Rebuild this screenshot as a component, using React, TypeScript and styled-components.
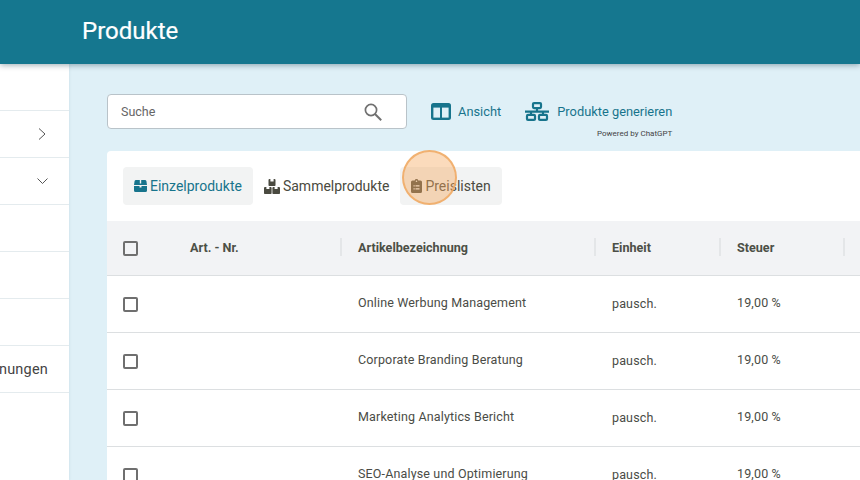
import React from "react";
import styled, { createGlobalStyle } from "styled-components";

const Global = createGlobalStyle`
  html, body { margin: 0; padding: 0; width: 860px; height: 480px; overflow: hidden; }
  body { font-family: Roboto, "Liberation Sans", sans-serif; background: #dff0f7; }
  * { box-sizing: border-box; }
`;

const Page = styled.div`
  position: relative;
  width: 860px;
  height: 480px;
  overflow: hidden;
  display: flex;
  flex-direction: column;
`;

const Header = styled.header`
  height: 64px;
  flex: none;
  background: #15778f;
  display: flex;
  align-items: center;
  padding-left: 82px;
  box-shadow: 0 1px 6px rgba(0, 40, 60, 0.4);
  position: relative;
  z-index: 2;
`;

const Title = styled.h1`
  margin: 0;
  color: #fff;
  font-size: 24px;
  font-weight: 400;
  -webkit-text-stroke: 0.2px #fff;
  position: relative;
  top: -1px;
`;

const Body = styled.div`
  flex: 1;
  display: flex;
  min-height: 0;
`;

const Sidebar = styled.nav`
  width: 69px;
  flex: none;
  background: #fff;
  overflow: hidden;
  padding-top: 46px;
  box-shadow: 1px 0 2px rgba(0, 60, 90, 0.06);
`;

const NavRow = styled.div`
  height: 47px;
  border-top: 1px solid #e4ebee;
  display: flex;
  align-items: center;
  justify-content: flex-end;
  padding-right: 21px;
  color: #444;
  font-size: 14.5px;
  white-space: nowrap;
  letter-spacing: 0.2px;
`;

const NavChevron = styled.svg<{ $wide?: boolean }>`
  width: ${(p) => (p.$wide ? 13 : 10)}px;
  height: 14px;
  margin-right: ${(p) => (p.$wide ? -1 : 0)}px;
  fill: none;
  stroke: #555;
  stroke-width: 1;
`;

const Main = styled.main`
  flex: 1;
  min-width: 0;
  padding: 30px 0 0 38px;
  overflow: hidden;
`;

const Toolbar = styled.div`
  display: flex;
  align-items: flex-start;
  height: 57px;
`;

const Search = styled.div`
  width: 300px;
  height: 35px;
  background: #fff;
  border: 1px solid #b9c3c9;
  border-radius: 4px;
  display: flex;
  align-items: center;
  justify-content: space-between;
  padding: 0 24px 0 13px;
  color: #666;
  font-size: 12.5px;
`;

const ToolAction = styled.div`
  display: flex;
  align-items: center;
  height: 35px;
  color: #17748c;
  font-size: 12.85px;
  white-space: nowrap;
`;

const AnsichtAction = styled(ToolAction)`
  margin-left: 24px;
  gap: 7px;
`;

const GenerateBlock = styled.div`
  margin-left: 24px;
  display: flex;
  flex-direction: column;
  align-items: flex-end;
`;

const GenerateAction = styled(ToolAction)`
  gap: 8px;
`;

const Powered = styled.div`
  font-size: 8px;
  color: #444;
  line-height: 10px;
`;

const Panel = styled.section`
  width: 860px;
  background: #fff;
  border-radius: 4px 0 0 0;
`;

const Tabs = styled.div`
  display: flex;
  padding: 16px;
  height: 70px;
`;

const Tab = styled.div<{ $active?: boolean; $shaded?: boolean }>`
  height: 38px;
  display: flex;
  align-items: center;
  gap: 3px;
  padding: 0 11px 0 11px;
  border-radius: 4px;
  font-size: 14px;
  white-space: nowrap;
  color: ${(p) => (p.$active ? "#17748c" : "#4a4a40")};
  background: ${(p) => (p.$active || p.$shaded ? "#f2f3f3" : "transparent")};
  svg { flex: none; fill: currentColor; }
`;

const columns = "66px 168px 254px 125px 124px 1fr";

const HeadRow = styled.div`
  display: grid;
  grid-template-columns: ${columns};
  height: 55px;
  background: #f2f3f5;
  border-bottom: 1px solid #dcdfe1;
  align-items: center;
  color: #4c4f46;
  font-size: 12.6px;
  font-weight: 700;
`;

const HeadCell = styled.div<{ $sep?: boolean }>`
  position: relative;
  padding: 0 0 2px 17px;
  height: 100%;
  display: flex;
  align-items: center;
  &::after {
    content: "";
    display: ${(p) => (p.$sep ? "block" : "none")};
    position: absolute;
    right: -1px;
    top: 17px;
    height: 18px;
    width: 2px;
    background: #e4e6e8;
  }
`;

const Row = styled.div`
  display: grid;
  grid-template-columns: ${columns};
  height: 57px;
  border-bottom: 1px solid #dcdfe1;
  align-items: center;
  color: #4a4c46;
  font-size: 12.5px;
  letter-spacing: 0.15px;
`;

const Cell = styled.div<{ $shift?: number }>`
  padding-left: 17px;
  white-space: nowrap;
  position: relative;
  top: ${(p) => p.$shift ?? -2}px;
`;

const BoxCell = styled.div`
  padding-left: 16px;
  display: flex;
`;

const Check = styled.span`
  width: 15px;
  height: 15px;
  border: 2px solid #6f6f6f;
  border-radius: 2px;
  display: block;
`;

const Spot = styled.div`
  position: absolute;
  left: 402px;
  top: 150px;
  width: 55px;
  height: 55px;
  border-radius: 50%;
  background: rgba(246, 170, 95, 0.42);
  border: 2px solid rgba(240, 170, 100, 0.85);
  z-index: 3;
`;

const rows = [
  ["Online Werbung Management", "19,00 %"],
  ["Corporate Branding Beratung", "19,00 %"],
  ["Marketing Analytics Bericht", "19,00 %"],
  ["SEO-Analyse und Optimierung", "19,00 %"],
];

export default function App() {
  return (
    <>
      <Global />
      <Page>
        <Header>
          <Title>Produkte</Title>
        </Header>
        <Body>
          <Sidebar>
            <NavRow>
              <NavChevron viewBox="0 0 10 14">
                <path d="M1 1.5 7 7l-6 5.5" />
              </NavChevron>
            </NavRow>
            <NavRow>
              <NavChevron $wide viewBox="0 0 10 14">
                <path d="M0 4.5 5 9.5l5-5" />
              </NavChevron>
            </NavRow>
            <NavRow />
            <NavRow />
            <NavRow />
            <NavRow>Rechnungen</NavRow>
            <NavRow />
          </Sidebar>
          <Main>
            <Toolbar>
              <Search>
                <span>Suche</span>
                <svg width="18" height="18" viewBox="0 0 18 18" fill="none" stroke="#707070" strokeWidth="1.7">
                  <circle cx="7" cy="7" r="5.6" />
                  <path d="m11 11 6.2 6.2" strokeWidth="2" />
                </svg>
              </Search>
              <AnsichtAction>
                <svg width="20" height="17" viewBox="0 0 20 17">
                  <rect x="0" y="0" width="20" height="17" rx="2.5" fill="#17748c" />
                  <rect x="2.4" y="4.6" width="6.6" height="10" fill="#dff0f7" />
                  <rect x="11" y="4.6" width="6.6" height="10" fill="#dff0f7" />
                </svg>
                Ansicht
              </AnsichtAction>
              <GenerateBlock>
                <GenerateAction>
                  <svg width="24" height="19" viewBox="0 0 24 19" fill="none" stroke="#17748c" strokeWidth="2.2">
                    <rect x="8" y="1.1" width="8" height="5" rx="1" />
                    <path d="M12 6v3.6M0 9.6h24M6 9.6v3M18 9.6v3" />
                    <rect x="2" y="12.9" width="8" height="5" rx="1" />
                    <rect x="14" y="12.9" width="8" height="5" rx="1" />
                  </svg>
                  Produkte generieren
                </GenerateAction>
                <Powered>Powered by ChatGPT</Powered>
              </GenerateBlock>
            </Toolbar>
            <Panel>
              <Tabs>
                <Tab $active>
                  <svg width="13" height="12" viewBox="0 0 13 12">
                    <path d="M2 0h3.8v3.4h1.4V0H11a1.5 1.5 0 0 1 1.4 1L13 5H0l.6-4A1.5 1.5 0 0 1 2 0Z" />
                    <path d="M0 6h5.5v1.6h2V6H13v4.5a1.5 1.5 0 0 1-1.5 1.5h-10A1.5 1.5 0 0 1 0 10.500Z" />
                  </svg>
                  Einzelprodukte
                </Tab>
                <Tab>
                  <svg width="16" height="15" viewBox="0 0 16 15">
                    <path d="M4.500 1a1 1 0 0 1 1-1h.9v2.400h3.200V0h.9a1 1 0 0 1 1 1v5.300a.7.7 0 0 1-.7.7H5.200a.7.7 0 0 1-.7-.7Z" />
                    <path d="M0 9a1 1 0 0 1 1-1h1.400v2h3V8H6.600a1 1 0 0 1 1 1v5.200a.8.8 0 0 1-.8.8H.8a.8.8 0 0 1-.8-.8Z" />
                    <path d="M8.400 9a1 1 0 0 1 1-1h1.200v2h3V8H15a1 1 0 0 1 1 1v5.200a.8.8 0 0 1-.8.8H9.200a.8.8 0 0 1-.8-.8Z" />
                  </svg>
                  Sammelprodukte
                </Tab>
                <Tab $shaded>
                  <svg width="11" height="14" viewBox="0 0 11 14">
                    <path
                      fillRule="evenodd"
                      d="M5.500 0A1.900 1.900 0 0 1 7.300 1.400H9.500A1.500 1.500 0 0 1 11 2.900v9.600A1.500 1.500 0 0 1 9.500 14h-8A1.500 1.500 0 0 1 0 12.500V2.900a1.500 1.500 0 0 1 1.500-1.500h2.200A1.900 1.900 0 0 1 5.500 0Zm-3 6.300v1.200h1.200V6.300Zm2 0v1.200h4V6.300Zm-2 3v1.200h1.200V9.300Zm2 0v1.200h4V9.300Zm1-7.900a.8.800 0 1 0 0 1.600.8.800 0 0 0 0-1.600Z"
                    />
                  </svg>
                  Preislisten
                </Tab>
              </Tabs>
              <HeadRow>
                <BoxCell>
                  <Check />
                </BoxCell>
                <HeadCell $sep>Art. - Nr.</HeadCell>
                <HeadCell $sep>Artikelbezeichnung</HeadCell>
                <HeadCell $sep>Einheit</HeadCell>
                <HeadCell $sep>Steuer</HeadCell>
                <HeadCell />
              </HeadRow>
              {rows.map(([name, tax]) => (
                <Row key={name}>
                  <BoxCell>
                    <Check />
                  </BoxCell>
                  <Cell />
                  <Cell>{name}</Cell>
                  <Cell $shift={-1}>pausch.</Cell>
                  <Cell>{tax}</Cell>
                  <Cell />
                </Row>
              ))}
            </Panel>
          </Main>
        </Body>
        <Spot />
      </Page>
    </>
  );
}
